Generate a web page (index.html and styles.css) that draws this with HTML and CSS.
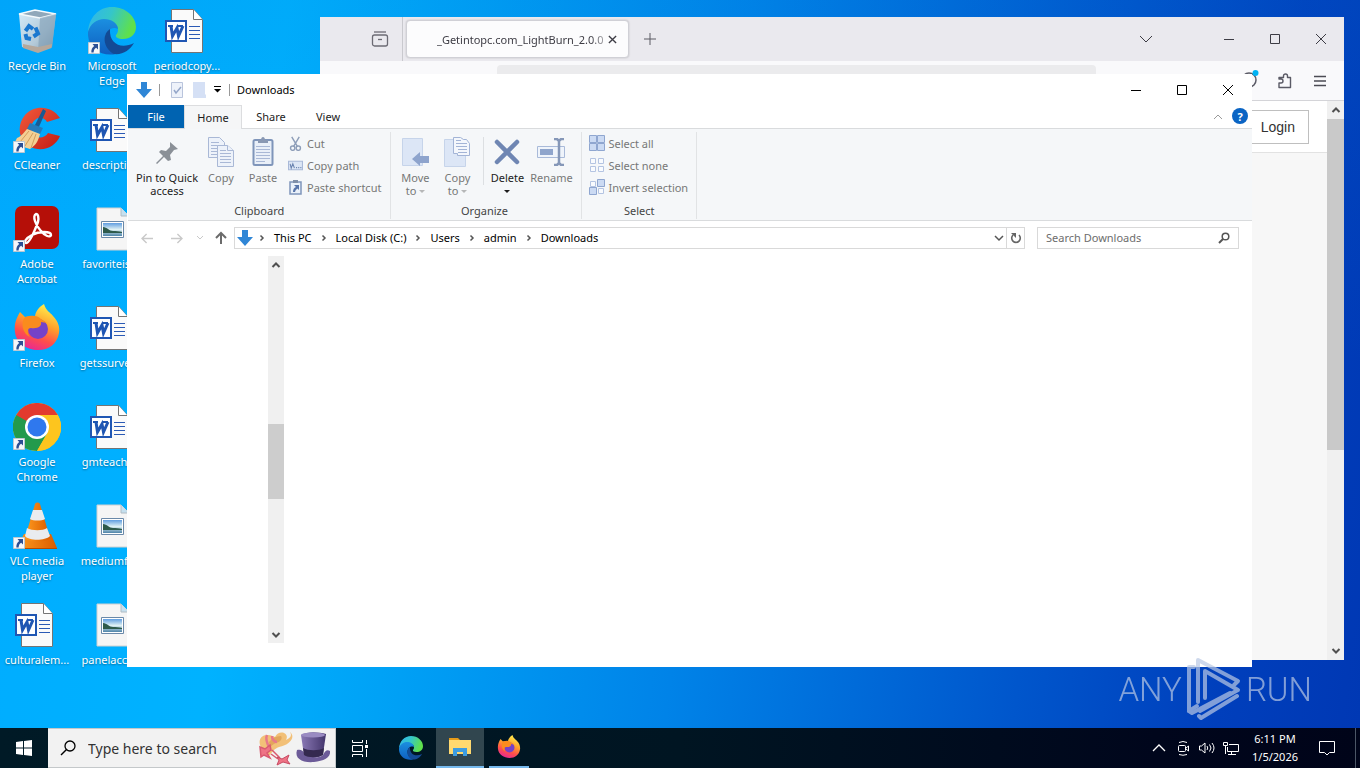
FILE: index.html
```html
<!DOCTYPE html>
<html lang="en">
<head>
<meta charset="utf-8">
<title>Desktop</title>
<link rel="stylesheet" href="styles.css">
</head>
<body>
<svg class="defs" width="0" height="0" aria-hidden="true">
  <defs>
    <linearGradient id="edge-a" x1="0" y1="0" x2="1" y2=".3"><stop offset="0" stop-color="#2fb4f0"/><stop offset=".5" stop-color="#35c6c9"/><stop offset="1" stop-color="#5fe04c"/></linearGradient>
    <linearGradient id="edge-b" x1="0" y1="0" x2="0" y2="1"><stop offset="0" stop-color="#1b8fe0"/><stop offset="1" stop-color="#0f5fc0"/></linearGradient>
    <linearGradient id="fx-a" x1=".7" y1="0" x2=".3" y2="1"><stop offset="0" stop-color="#fff14f"/><stop offset=".4" stop-color="#ffa12b"/><stop offset=".7" stop-color="#ff4f4a"/><stop offset="1" stop-color="#e6259a"/></linearGradient>
    <linearGradient id="bin-a" x1="0" y1="0" x2="1" y2="1"><stop offset="0" stop-color="#e8f2fa"/><stop offset=".6" stop-color="#c3cdd6"/><stop offset="1" stop-color="#8e9aa6"/></linearGradient>
    <linearGradient id="cc-a" x1="0" y1="0" x2="1" y2="1"><stop offset="0" stop-color="#f25a3c"/><stop offset="1" stop-color="#c21c14"/></linearGradient>
    <linearGradient id="vlc-a" x1="0" y1="0" x2="1" y2="0"><stop offset="0" stop-color="#ff9a1f"/><stop offset="1" stop-color="#d95c00"/></linearGradient>
    <linearGradient id="pic-a" x1="0" y1="0" x2="0" y2="1"><stop offset="0" stop-color="#5f9de0"/><stop offset=".5" stop-color="#dff1f4"/><stop offset="1" stop-color="#4d83a8"/></linearGradient>
    <linearGradient id="hat-a" x1="0" y1="0" x2="1" y2="0"><stop offset="0" stop-color="#8a79b5"/><stop offset="1" stop-color="#43356b"/></linearGradient>

    <symbol id="i-link" viewBox="0 0 12 12"><path fill="#f5f7fa" stroke="#bcc8d2" d="M.5.5h11v11H.5z"/><path fill="#2c4f94" d="M4.500 2H10v5.500L8.200 5.800C6.500 6.800 5.700 8.200 5.600 10.500H3.400C3 7.800 4.200 5.300 6.200 3.900z"/></symbol>
    <symbol id="i-bin" viewBox="0 0 48 48"><path d="M6 7 22 3l21 4-4 33-14 5-16-5z" fill="url(#bin-a)" opacity=".92"/><path d="M6 7 22 3l21 4-16 4z" fill="#90a8ba" stroke="#f4fafd" stroke-width="1.500"/><path d="m27 11-2 34 14-5 4-33z" fill="#7f9db4" opacity=".6"/><path d="M10 37 25 40l14-3-.5 4-13.500 5-15-5z" fill="#b5a89c"/><g fill="none" stroke="#1b78cf" stroke-width="4"><path d="m12.500 24 3.500-5 4 3M22.500 20.500l2.500 6-4.500 3M18 32l-4.500-1-1-4"/></g></symbol>
    <symbol id="i-edge" viewBox="0 0 48 48"><path d="M0 25C1 10 11 0 24 0c14 0 24 10 24 20 0 8-6 12-13 12-5 0-8-2-7-4 1-1 2-3 2-5 0-6-6-9-13-9C9 14 3 18 0 25z" fill="url(#edge-a)"/><path d="M0 25C2 17 9 12 16 12c7 0 14 4 14 10-5-3-13 1-13 10 0 7 5 12 11 15C12 50-1 40 0 25z" fill="url(#edge-b)"/><path d="M22 22c-9 6-6 20 4 25 9 1 16-4 20-11-12 6-25 2-24-14z" fill="#134a95"/></symbol>
    <symbol id="i-word" viewBox="0 0 48 48"><path d="M8.500 2.500h22l9 10v33h-31z" fill="#fafafa" stroke="#747474"/><path d="M30.500 2.500v10h9" fill="#fff" stroke="#747474"/><path stroke="#2b5ab5" d="M26 19.500h11M26 23.500h11M26 27.500h11M26 31.500h11"/><path fill="#fff" stroke="#1f56b3" stroke-width="2" d="M3 14h20v20H3z"/><path d="M5 19h5M14 19h6" stroke="#1f56b3" stroke-width="2"/><path d="m8 19 1.500 10 4.500-8 1.500 8 4.500-10" fill="none" stroke="#1f56b3" stroke-width="3"/></symbol>
    <symbol id="i-image" viewBox="0 0 48 48"><path d="M9 3h24l8 8v34H9z" fill="#f5f5f5" stroke="#d0d0d0"/><path d="M33 3v8h8" fill="#c5e0ef" stroke="#b0bcc4"/><path d="M13.500 16.500h22v16h-22z" fill="#fff" stroke="#6a89a9"/><path fill="url(#pic-a)" d="M15 18h19v13H15z"/><path fill="#2e5a4b" d="M15 22c4 0 6 4 10 4 3 0 6 0 9 1v1H15z"/></symbol>
    <symbol id="i-cc" viewBox="0 0 48 48"><path d="M47 12C39 0 22-2 12 9 3 20 6 34 16 40c12 7 26 2 31-10l-12-3c-3 5-10 6-14 2-4-5-3-12 1-15 4-4 10-2 12 2z" fill="url(#cc-a)"/><path d="m30 3 3 2-8 18-4-2z" fill="#195a93"/><path d="m17 17 13 5-3 6-13-5z" fill="#247cbc"/><path d="m14 23 13 5c-2 7-3 10-10 15L1 38l3-6c5-2 7-6 10-9z" fill="#f4cf94"/><path d="m16 25-9 11m13-9-8 13m11-12-5 14" stroke="#d39d5b"/></symbol>
    <symbol id="i-acro" viewBox="0 0 48 48"><rect x="2" y="1" width="44" height="43" rx="7" fill="#b50f08"/><path d="M23 9c-4 2 0 12 5 17 4 5 9 7 10 4 0-4-12-4-19 0-6 3-9 8-6 8 4 0 9-13 12-21 1-5 0-8-2-8z" fill="none" stroke="#fff" stroke-width="2.400"/></symbol>
    <symbol id="i-fx" viewBox="0 0 48 48"><path d="M2 28C1 20 3 15 7 8l5 5c5-1 8-1 10 0 0-5 4-10 9-13 2 7 6 8 9 12 5 5 7 11 6 17-2 11-10 17-21 17S3 39 2 28z" fill="url(#fx-a)"/><circle cx="25" cy="25" r="10" fill="#7542c8"/><path d="M12 13c7-2 12-2 16 2l6 4-6-1c1 4-3 7-10 6-4 0-4 5-1 9-7-3-10-14-5-20z" fill="#fa8c1d"/></symbol>
    <symbol id="i-chrome" viewBox="0 0 48 48"><circle cx="24" cy="24" r="24" fill="#ffc91f"/><path d="M24 24 13.600 30 3.200 12a24 24 0 0 1 41.600 0z" fill="#e23a2e"/><path d="M3.200 12a24 24 0 0 0 20.800 36l10.400-18z" fill="#239a4c"/><path d="M24 12h20.800A24 24 0 0 1 24 48l10.400-18z" fill="#fdc51e"/><circle cx="24" cy="24" r="12" fill="#fff"/><circle cx="24" cy="24" r="9.500" fill="#2f78ee"/></symbol>
    <symbol id="i-vlc" viewBox="0 0 48 48"><path d="m11 32h27l6 14H4z" fill="url(#vlc-a)"/><path d="M4 46h40v1H4z" fill="#b84a00"/><path d="M22 2c1-2 4-2 5 0l10 34c-4 5-21 5-25 0z" fill="url(#vlc-a)"/><path d="m20 8 9 0 3 9c-3 2-12 2-15 0z" fill="#e9ecef"/><path d="m14 26c5 3 16 3 20 0l3 8c-5 5-21 5-25 0z" fill="#e9ecef"/></symbol>
    <symbol id="i-down" viewBox="0 0 16 16"><path d="M5 0h6v7h5l-8 9-8-9h5z" fill="#2f86d6"/></symbol>
    <symbol id="i-pin" viewBox="0 0 24 24"><path d="m15 1 8 7-4 1-4 5 1 5-3 1-4-4-7 7-1-1 7-7-4-4 2-2 5 1 4-4z" fill="#8a9097"/></symbol>
    <symbol id="i-copy" viewBox="0 0 26 30"><g fill="#edf2fa" stroke="#a9b8d6"><path d="M.5.500h11l5 5v15H.5z"/><path d="M3 5.500h8M3 8.500h10M3 11.500h10M3 14.500h10M3 17.500h10"/><path d="M9.500 8.500h10l6 5v16h-16z"/><path d="M19.500 8.500v5h6M12 13.500h6M12 16.500h11M12 19.500h11M12 22.500h11M12 25.500h11"/></g></symbol>
    <symbol id="i-paste" viewBox="0 0 22 30"><rect x="1.500" y="3" width="19" height="25" rx="1.500" fill="#e9eff8" stroke="#7f95ba" stroke-width="2"/><path fill="#8998b3" d="M6 6V3h3c0-4 4-4 4 0h3v3z"/><path stroke="#a9b8d6" d="M4 9.500h14M4 12.500h14M4 15.500h14M4 18.500h14M4 21.500h14M4 24.500h9"/></symbol>
    <symbol id="i-cut" viewBox="0 0 14 16"><g fill="none" stroke="#8d9db8" stroke-width="1.500"><path d="m3 1 6 10M11 1 5 11"/><circle cx="4" cy="13" r="2.300"/><circle cx="10" cy="13" r="2.300"/></g></symbol>
    <symbol id="i-path" viewBox="0 0 14 9"><path fill="#dce6f5" stroke="#a9b9d8" d="M.5.500h13v8H.5z"/><path fill="none" stroke="#6b84b0" d="m2 3 1 4 1.500-4L6 7M7.500 6.500h1M9.500 6.500h1M11.500 6.500h1"/></symbol>
    <symbol id="i-short" viewBox="0 0 13 15"><path d="M1 2h11v12H1z" fill="#eaf1fa" stroke="#7f95ba" stroke-width="1.500"/><path fill="#7f8fa8" d="M4 0h5v3H4z"/><path fill="#5875aa" d="M5 5h5v5L8.500 8.500Q6 10 6 12H4q0-4 3-5z"/></symbol>
    <symbol id="i-move" viewBox="0 0 28 30"><path fill="#dce6f6" stroke="#c6d4ea" d="M1.500 1.500h20v27h-20z"/><path fill="#8ea4cd" d="m11 22 8-7v4h9v7h-9v3z"/></symbol>
    <symbol id="i-copyto" viewBox="0 0 28 30"><path fill="#dce6f6" stroke="#c6d4ea" d="M1.500 2.500h21v27h-21z"/><path fill="#f4f7fc" stroke="#a3b4d6" d="M10.500.500h7l3 2h3l3 4v12h-12v-2h-4z"/><path stroke="#a3b4d6" d="M13 3.500h5M13 6.500h11M13 9.500h11M15 12.500h9M15 15.500h9"/></symbol>
    <symbol id="i-delete" viewBox="0 0 26 26"><path d="m3 3 20 20M23 3 3 23" stroke="#6f86b3" stroke-width="4.500" stroke-linecap="round"/></symbol>
    <symbol id="i-rename" viewBox="0 0 28 28"><path fill="#eff4fb" stroke="#a9bad9" d="M.5 8.500h27v11H.5z"/><path fill="#8fa5cc" d="M3 11h13v6H3z"/><path fill="none" stroke="#8597b8" stroke-width="2.500" d="M17 1h3l2 2 2-2h3M22 2v24M17 27h3l2-2 2 2h3"/></symbol>
    <symbol id="i-all" viewBox="0 0 16 16"><g fill="#cbdaf3" stroke="#8fa6d0"><path d="M.5.500h7v7h-7zM8.500.500h7v7h-7zM.5 8.500h7v7h-7zM8.500 8.500h7v7h-7z"/></g></symbol>
    <symbol id="i-none" viewBox="0 0 16 16"><g fill="#f9fbfe" stroke="#b4c4e2"><path d="M1.500 1.500h5v5h-5zM9.500 1.500h5v5h-5zM1.500 9.500h5v5h-5zM9.500 9.500h5v5h-5z"/></g></symbol>
    <symbol id="i-invert" viewBox="0 0 16 16"><path fill="#f9fbfe" stroke="#b4c4e2" d="M1.500 2.500h5v5h-5zM9.500 9.500h5v5h-5z"/><path fill="#cbdaf3" stroke="#8fa6d0" d="M8.500.500h7v7h-7zM.5 8.500h7v7h-7z"/></symbol>
    <symbol id="i-min" viewBox="0 0 12 12"><path d="M1 6.500h10" stroke="currentColor"/></symbol>
    <symbol id="i-max" viewBox="0 0 12 12"><path d="M1.500 1.500h9v9h-9z" fill="none" stroke="currentColor"/></symbol>
    <symbol id="i-x" viewBox="0 0 12 12"><path d="m1 1 10 10M11 1 1 11" stroke="currentColor" fill="none"/></symbol>
    <symbol id="i-chev" viewBox="0 0 12 12"><path d="m0 3 6 6 6-6" stroke="currentColor" fill="none"/></symbol>
    <symbol id="i-up" viewBox="0 0 12 12"><path d="m2.500 8 3.500-3.500L9.500 8" stroke="currentColor" stroke-width="2" fill="none"/></symbol>
    <symbol id="i-dn" viewBox="0 0 12 12"><path d="m2.500 4 3.500 3.500L9.500 4" stroke="currentColor" stroke-width="2" fill="none"/></symbol>
    <symbol id="i-right" viewBox="0 0 8 8"><path d="m2.500 1.500 2.500 2.500-2.500 2.500" stroke="currentColor" stroke-width="1.500" fill="none"/></symbol>
    <symbol id="i-arrow" viewBox="0 0 14 12"><path d="M1 6h12M6 1 1 6l5 5" stroke="currentColor" stroke-width="1.500" fill="none"/></symbol>
    <symbol id="i-lens" viewBox="0 0 16 16"><circle cx="10" cy="6" r="5" fill="none" stroke="currentColor" stroke-width="1.300"/><path d="M6.500 9.500 1 15" stroke="currentColor" stroke-width="1.500"/></symbol>
    <symbol id="i-find" viewBox="0 0 12 12"><circle cx="7.500" cy="4.500" r="3.300" fill="none" stroke="currentColor" stroke-width="1.500"/><path d="M5 7 1 11" stroke="currentColor" stroke-width="2"/></symbol>
  </defs>
</svg>

<main class="desktop">
  <ul class="shortcuts">
    <li><a href="#bin"><svg class="big"><use href="#i-bin"/></svg><span>Recycle Bin</span></a></li>
    <li><a href="#ccleaner"><svg class="big"><use href="#i-cc"/></svg><svg class="link"><use href="#i-link"/></svg><span>CCleaner</span></a></li>
    <li><a href="#acrobat"><svg class="big"><use href="#i-acro"/></svg><svg class="link"><use href="#i-link"/></svg><span>Adobe Acrobat</span></a></li>
    <li><a href="#firefox"><svg class="big"><use href="#i-fx"/></svg><svg class="link"><use href="#i-link"/></svg><span>Firefox</span></a></li>
    <li><a href="#chrome"><svg class="big"><use href="#i-chrome"/></svg><svg class="link"><use href="#i-link"/></svg><span>Google Chrome</span></a></li>
    <li><a href="#vlc"><svg class="big"><use href="#i-vlc"/></svg><svg class="link"><use href="#i-link"/></svg><span>VLC media player</span></a></li>
    <li><a href="#cultural"><svg class="big"><use href="#i-word"/></svg><span>culturalem...</span></a></li>
    <li><a href="#edge"><svg class="big"><use href="#i-edge"/></svg><svg class="link"><use href="#i-link"/></svg><span>Microsoft Edge</span></a></li>
    <li><a href="#desc"><svg class="big"><use href="#i-word"/></svg><span>descriptio...</span></a></li>
    <li><a href="#fav"><svg class="big"><use href="#i-image"/></svg><span>favoriteisl...</span></a></li>
    <li><a href="#gets"><svg class="big"><use href="#i-word"/></svg><span>getssurvey...</span></a></li>
    <li><a href="#gm"><svg class="big"><use href="#i-word"/></svg><span>gmteache...</span></a></li>
    <li><a href="#medium"><svg class="big"><use href="#i-image"/></svg><span>mediumfo...</span></a></li>
    <li><a href="#panel"><svg class="big"><use href="#i-image"/></svg><span>panelacco...</span></a></li>
    <li><a href="#period"><svg class="big"><use href="#i-word"/></svg><span>periodcopy...</span></a></li>
  </ul>

  <section class="browser" aria-label="Browser">
    <header class="b-tabs">
      <button class="b-view" aria-label="Firefox View"><svg viewBox="0 0 18 18"><g fill="none" stroke="#6c6b74" stroke-width="1.300"><path d="M3 2h12"/><rect x="1.500" y="5" width="15" height="11" rx="2"/><path d="M7 9.500h4"/></g></svg></button>
      <div class="b-tab"><span class="b-title">_Getintopc.com_LightBurn_2.0.0</span><button class="b-close" aria-label="Close tab"><svg viewBox="0 0 10 10"><path d="m1 1 8 8M9 1 1 9" stroke="#3e3d45" stroke-width="1.500"/></svg></button></div>
      <button class="b-new" aria-label="New tab"><svg viewBox="0 0 12 12"><path d="M6 0v12M0 6h12" stroke="#5b5a62"/></svg></button>
      <span class="grow"></span>
      <button class="b-list" aria-label="List all tabs"><svg class="s12"><use href="#i-chev"/></svg></button>
      <button class="win-btn" aria-label="Minimize"><svg class="s12"><use href="#i-min"/></svg></button>
      <button class="win-btn" aria-label="Maximize"><svg class="s12"><use href="#i-max"/></svg></button>
      <button class="win-btn" aria-label="Close"><svg class="s12"><use href="#i-x"/></svg></button>
    </header>
    <div class="b-bar">
      <div class="b-url"></div>
      <button class="b-acc" aria-label="Account"><svg viewBox="0 0 18 18"><circle cx="8" cy="10" r="7" fill="none" stroke="#5b5b66" stroke-width="1.500"/><circle cx="14.500" cy="3" r="3" fill="#00b3f4"/></svg></button>
      <button class="b-ext" aria-label="Extensions"><svg viewBox="0 0 16 16"><path d="M2 14.500V10h2a2 2 0 0 0 0-4H2V4.500h4.500V3a2 2 0 0 1 4 0v1.500h3v10z" fill="none" stroke="#5b5b66" stroke-width="1.400" stroke-linejoin="round"/></svg></button>
      <button class="b-menu" aria-label="Menu"><svg viewBox="0 0 12 12"><path d="M0 1.500h12M0 6h12M0 10.500h12" stroke="#4b4b54" stroke-width="1.300"/></svg></button>
    </div>
    <div class="b-page">
      <div class="b-doc"><div class="b-head"><a class="login" href="#login">Login</a></div></div>
      <div class="sbar b-scroll"><svg class="s12"><use href="#i-up"/></svg><i class="b-thumb"></i><span class="grow"></span><svg class="s12"><use href="#i-dn"/></svg></div>
    </div>
  </section>

  <section class="explorer" aria-label="Downloads">
    <header class="e-title">
      <svg class="s16"><use href="#i-down"/></svg><i class="rule"></i>
      <svg class="q1" viewBox="0 0 12 16"><path d="M.5.500h11v15H.5z" fill="#eef2fa" stroke="#b9c4dc"/><path d="m3 8 2 3 5-6" fill="none" stroke="#94a6c9" stroke-width="1.500"/></svg>
      <svg class="q2" viewBox="0 0 13 16"><path d="M0 0h12v12l1 1v3H0z" fill="#d5e0f5"/></svg>
      <svg class="q3" viewBox="0 0 7 7"><path d="M0 .500h7" stroke="#000"/><path d="M0 3h7L3.500 6.500z"/></svg><i class="rule"></i>
      <h1>Downloads</h1><span class="grow"></span>
      <button class="win-btn" aria-label="Minimize"><svg class="s12"><use href="#i-min"/></svg></button>
      <button class="win-btn" aria-label="Maximize"><svg class="s12"><use href="#i-max"/></svg></button>
      <button class="win-btn" aria-label="Close"><svg class="s12"><use href="#i-x"/></svg></button>
    </header>
    <nav class="e-tabs">
      <button class="file">File</button><button class="on">Home</button><button>Share</button><button>View</button>
      <span class="grow"></span>
      <button class="fold" aria-label="Collapse ribbon"><svg viewBox="0 0 10 10"><path d="m1 7 4-4 4 4" fill="none" stroke="#9a9a9a"/></svg></button>
      <button class="help" aria-label="Help">?</button>
    </nav>
    <div class="ribbon">
      <div class="group">
        <div class="tools">
          <button class="tool pin"><svg class="i-24"><use href="#i-pin"/></svg><span>Pin to Quick access</span></button>
          <button class="tool off"><svg class="i-30"><use href="#i-copy"/></svg><span>Copy</span></button>
          <button class="tool off"><svg class="i-30"><use href="#i-paste"/></svg><span>Paste</span></button>
          <div class="minis clip">
            <button><svg><use href="#i-cut"/></svg>Cut</button>
            <button><svg><use href="#i-path"/></svg>Copy path</button>
            <button><svg><use href="#i-short"/></svg>Paste shortcut</button>
          </div>
        </div>
        <h2>Clipboard</h2>
      </div>
      <div class="group organize">
        <div class="tools">
          <button class="tool off"><svg class="i-30"><use href="#i-move"/></svg><span>Move<br>to <i class="tri"></i></span></button>
          <button class="tool off"><svg class="i-30"><use href="#i-copyto"/></svg><span>Copy<br>to <i class="tri"></i></span></button>
          <i class="sep"></i>
          <button class="tool"><svg class="i-26"><use href="#i-delete"/></svg><span>Delete<br><i class="tri"></i></span></button>
          <button class="tool off wide"><svg class="i-28"><use href="#i-rename"/></svg><span>Rename</span></button>
        </div>
        <h2>Organize</h2>
      </div>
      <div class="group">
        <div class="tools">
          <div class="minis sel">
            <button><svg><use href="#i-all"/></svg>Select all</button>
            <button><svg><use href="#i-none"/></svg>Select none</button>
            <button><svg><use href="#i-invert"/></svg>Invert selection</button>
          </div>
        </div>
        <h2>Select</h2>
      </div>
    </div>
    <div class="address">
      <button class="nav dim" aria-label="Back"><svg><use href="#i-arrow"/></svg></button>
      <button class="nav dim fwd" aria-label="Forward"><svg><use href="#i-arrow"/></svg></button>
      <button class="recent dim" aria-label="Recent locations"><svg viewBox="0 0 8 8"><path d="m1 2 3 3 3-3" fill="none" stroke="currentColor"/></svg></button>
      <button class="upward" aria-label="Up"><svg viewBox="0 0 14 14"><path d="M7 13V2M2 7l5-5 5 5" fill="none" stroke="#6b6b6b" stroke-width="2"/></svg></button>
      <div class="crumbs">
        <svg class="s16"><use href="#i-down"/></svg>
        <svg class="c"><use href="#i-right"/></svg><a href="#pc">This PC</a>
        <svg class="c"><use href="#i-right"/></svg><a href="#c">Local Disk (C:)</a>
        <svg class="c"><use href="#i-right"/></svg><a href="#users">Users</a>
        <svg class="c"><use href="#i-right"/></svg><a href="#admin">admin</a>
        <svg class="c"><use href="#i-right"/></svg><a href="#dl">Downloads</a>
        <span class="grow"></span>
        <button class="drop" aria-label="Previous locations"><svg viewBox="0 0 10 10"><path d="m1 3 4 4 4-4" fill="none" stroke="#555" stroke-width="1.500"/></svg></button>
        <button class="reload" aria-label="Refresh"><svg viewBox="0 0 12 12"><path d="M9 3a4.300 4.300 0 1 1-6 0" fill="none" stroke="#666" stroke-width="1.600"/><path d="M1 1h5v5z" fill="#666"/></svg></button>
      </div>
      <label class="find"><input type="text" placeholder="Search Downloads" aria-label="Search Downloads"><svg><use href="#i-find"/></svg></label>
    </div>
    <div class="e-body">
      <div class="sbar e-scroll"><svg class="s12"><use href="#i-up"/></svg><span class="f1"></span><i class="e-thumb"></i><span class="f2"></span><svg class="s12"><use href="#i-dn"/></svg></div>
    </div>
  </section>

  <div class="mark">
    <span>ANY</span>
    <svg viewBox="0 0 56 66"><g fill="none" stroke-width="4" stroke-linejoin="round" stroke-linecap="round"><path d="M8 11H3v44l8-5"/><path d="M12 46V4l40 21-4 4M19 42V15l33 19-38 21"/><path d="m3 55 3 2 38-20M13 60l2 2 36-22"/></g></svg>
    <span>RUN</span>
  </div>
</main>

<footer class="taskbar">
  <button class="cell" aria-label="Start"><svg class="s16" viewBox="0 0 16 16"><path fill="#fff" d="M0 2l7-1v6.500H0zM8 1l8-1v7.500H8zM0 8.500h7V15l-7-1zM8 8.500h8V16l-8-1z"/></svg></button>
  <label class="search"><svg class="lens"><use href="#i-lens"/></svg><input type="text" placeholder="Type here to search" aria-label="Type here to search">
    <svg class="hats" viewBox="0 0 72 36"><path d="M2 17C-2 10 3 4 9 5c3 0 5 1 7 2C20-1 31 3 27 10c5-2 6-5 4-8 6 5 0 13-11 15-5 2-7 5-9 8C6 26 3 22 2 17z" fill="#f2c078"/><path d="M10 12c3-4 7-6 12-6 2 3-1 6-5 7-3 1-5 3-6 5z" fill="#e2a65c"/><path d="M8 5c-2 4 0 8 2 12M13 6c0 3 2 6 5 6" fill="none" stroke="#e8798a" stroke-width="2.500"/><path d="m1 17 5 2 5-4 1 5-4 3 3 5-6-3-3 2zM13 20l8 8M12 24l7 5" fill="#ee7385" stroke="#d9596f" stroke-width="1.500"/><path d="m18 27 5 2 7-4-2 5 3 4-7-2-6 3 2-5z" fill="#ee7385" stroke="#c74a62"/><path d="M42 5c6-4 18-3 25-1l-3 20c-4 5-16 5-19 1z" fill="url(#hat-a)"/><ellipse cx="54" cy="5" rx="12" ry="2.500" fill="#9a8bc2"/><path d="M38 20c-3 9 6 13 17 12 9-1 17-4 16-11-3-2-5 0-7 4-5 4-16 3-18-1-2-4-5-5-8-4z" fill="#6c5b98"/><path d="m44 18 1 7c4 3 14 3 19 0l1-7c-5 3-16 3-21 0z" fill="#34294f"/></svg></label>
  <button class="cell" aria-label="Task view"><svg class="s18" viewBox="0 0 18 18"><g fill="none" stroke="#fff"><path d="M1.500 1v2.500h10V1M1.500 6.500h10v6h-10zM1.500 18v-2.500h10V18M15.500 1v4M15.500 10v8"/></g><path fill="#fff" d="M14 6h3v3h-3z"/></svg></button>
  <button class="cell gapped" aria-label="Edge"><svg class="s24"><use href="#i-edge"/></svg></button>
  <button class="cell active" aria-label="File Explorer"><svg class="s24" viewBox="0 0 24 24"><path d="M1 3h9l2 2h10v6H1z" fill="#e59b19"/><path d="M1 5h22v14H1z" fill="#ffd970"/><path d="M5 13h14v8h-4v-4H9v4H5z" fill="#3d9ce0"/></svg></button>
  <button class="cell running" aria-label="Firefox"><svg class="s24"><use href="#i-fx"/></svg></button>
  <span class="grow"></span>
  <button class="tray" aria-label="Show hidden icons"><svg viewBox="0 0 16 16"><path d="m2 11 6-6 6 6" fill="none" stroke="#fff" stroke-width="1.300"/></svg></button>
  <button class="tray" aria-label="Meet now"><svg viewBox="0 0 16 16"><g fill="none" stroke="#fff"><rect x="3.500" y="5.500" width="7" height="6" rx="1"/><path d="m11 8 2.500-2v5L11 9M4 2.500q4-2 8 0M4 14.500q4 1.500 8 0"/></g></svg></button>
  <button class="tray" aria-label="Volume"><svg viewBox="0 0 16 16"><g fill="none" stroke="#fff"><path d="M.5 6v4h2l3.500 3V3L2.500 6zM8 6q1.500 2 0 4M10.500 4.500q3 3.500 0 7M13 3q4 5 0 10"/></g></svg></button>
  <button class="tray" aria-label="Network"><svg viewBox="0 0 16 16"><g fill="none" stroke="#fff"><path d="M6 4.500h9.500v7H4.500V7M8.500 11.500v3M5 14.500h8M.5 2.500h4v3h-4zM2.500 6v8"/></g></svg></button>
  <time class="clock">6:11 PM<br>1/5/2026</time>
  <button class="note" aria-label="Notifications"><svg viewBox="0 0 18 18"><path d="M1.500 2.500h15v11h-5L9 16l-2.500-2.500h-5z" fill="none" stroke="#fff"/></svg></button>
  <i class="peek"></i>
</footer>
</body>
</html>
```

FILE: styles.css
```css
* { box-sizing: border-box; }
body {
  margin: 0;
  height: 100vh;
  overflow: hidden;
  display: flex;
  flex-direction: column;
  font-family: "Noto Sans", "Open Sans", sans-serif;
  font-size: 11px;
  color: #1a1a1a;
}
button, input { font: inherit; color: inherit; border: 0; padding: 0; margin: 0; background: none; }
button { display: flex; align-items: center; justify-content: center; }
a { color: inherit; text-decoration: none; }
svg { display: block; flex: none; }
h1, h2 { margin: 0; font-size: 11px; font-weight: 400; }
.defs { position: absolute; }
.grow { flex: 1; }
.s12 { width: 12px; height: 12px; }
.s16 { width: 16px; height: 16px; }
.s18 { width: 18px; height: 18px; }
.s24 { width: 24px; height: 24px; }

.desktop {
  position: relative;
  flex: 1;
  background:
    linear-gradient(180deg, #0078d822, #0078d800 50%),
    linear-gradient(97deg, #00acff 0%, #00b2ff 20%, #00a2f6 32%, #0083e8 52%, #0056cc 76%, #003fbc 90%, #0038b4 100%);
}
.shortcuts {
  margin: 0;
  padding: 0;
  list-style: none;
  display: grid;
  grid-template-rows: repeat(7, 99px);
  grid-auto-columns: 75px;
  grid-auto-flow: column;
}
.shortcuts a { position: relative; display: flex; flex-direction: column; align-items: center; padding: 7px 4px 0 3px; color: #fff; }
.shortcuts span { margin-top: 3px; line-height: 15px; text-align: center; text-shadow: 0 1px 2px #0006; }
.big { width: 48px; height: 48px; }
.link { position: absolute; left: 13px; top: 42px; width: 12px; height: 12px; }

.browser {
  position: absolute;
  left: 320px; right: 16px; top: 17px; bottom: 68px;
  display: flex;
  flex-direction: column;
  background: #f7f7f8;
}
.b-tabs { display: flex; align-items: center; height: 44px; background: #eae9ee; color: #3d3c44; }
.b-view { width: 83px; height: 44px; padding-left: 38px; border-right: 1px solid #c9c9ce; }
.b-view svg { width: 18px; height: 18px; }
.b-tab { display: flex; align-items: center; width: 223px; height: 38px; margin-left: 3px; padding: 0 11px 0 30px; background: #fcfcfd; border: 1px solid #d0d0d6; border-radius: 4px; box-shadow: 0 0 2px #0003; }
.b-title { flex: 1; white-space: nowrap; mask-image: linear-gradient(90deg, #000 90%, #0004 100%); }
.b-close svg { width: 9px; height: 9px; }
.b-new { width: 42px; }
.b-new svg { width: 12px; height: 12px; }
.b-list { width: 46px; margin-right: 37px; }
.win-btn { width: 46px; height: 30px; }
.b-bar { display: flex; align-items: flex-start; height: 40px; padding: 4px 15px 0 177px; background: #f9f9fb; border-bottom: 1px solid #d4d4d8; }
.b-url { flex: 1; height: 32px; background: #ebebed; border-radius: 4px; margin-right: 145px; }
.b-ext svg { width: 16px; height: 16px; }
.b-acc { width: 18px; height: 28px; }
.b-acc svg { width: 18px; height: 18px; }
.b-ext { width: 52px; height: 32px; }
.b-menu { width: 18px; height: 32px; }
.b-menu svg { width: 12px; height: 12px; }
.b-page { flex: 1; display: flex; }
.b-doc { flex: 1; background: #f7f7f7; }
.b-head { height: 52px; display: flex; justify-content: flex-end; align-items: center; padding-right: 18px; background: #fff; border-bottom: 1px solid #e2e2e2; }
.login { padding: 0 13px 0 24px; border: 1px solid #bfbfbf; font: 14px/32px "Liberation Sans", sans-serif; color: #333; }

.sbar { display: flex; flex-direction: column; align-items: center; background: #f0f0f0; color: #505050; }
.b-scroll { width: 17px; padding: 3px 0; }
.b-thumb { width: 17px; flex: 0 1 331px; margin-top: 3px; background: #c9c9c9; }

.explorer {
  position: absolute;
  left: 127px; right: 108px; top: 74px; bottom: 61px;
  display: flex;
  flex-direction: column;
  padding-left: 1px;
  background: #fff;
  color: #1c1c1c;
}
.e-title { display: flex; align-items: center; height: 31px; padding: 0 1px 0 8px; color: #000; }
.rule { width: 1px; height: 12px; margin: 0 7px; background: #999; }
.q1 { width: 12px; height: 16px; margin: 0 10px 0 4px; }
.q2 { width: 13px; height: 16px; margin-right: 8px; }
.q3 { width: 7px; height: 7px; margin-right: 1px; }
.e-tabs { display: flex; align-items: flex-end; height: 24px; border-bottom: 1px solid #d9dbdd; }
.e-tabs button { width: 56px; height: 23px; }
.e-tabs .file { background: #0063b1; color: #fff; }
.e-tabs .on { width: 58px; height: 24px; margin-bottom: -1px; background: #f5f6f7; border: 1px solid #dcdddf; border-bottom: 0; }
.e-tabs .on + button { width: 58px; }
.e-tabs .fold { width: 20px; }
.fold svg { width: 10px; height: 10px; }
.e-tabs .help { width: 16px; height: 16px; margin: 0 4px 4px 4px; border-radius: 50%; background: #0a64c4; color: #fff; font-weight: 700; }
.ribbon { display: flex; height: 92px; background: #f5f7f9; border-bottom: 1px solid #d9dbdd; }
.group { display: flex; flex-direction: column; margin: 3px 0 1px; border-right: 1px solid #e1e3e5; }
.group h2 { line-height: 16px; text-align: center; color: #444; }
.organize { padding-right: 4px; }
.tools { flex: 1; display: flex; padding: 0 3px; }
.tool { flex-direction: column; justify-content: flex-start; width: 42px; line-height: 13px; padding-top: 5px; }
.tool svg { height: 30px; width: 28px; }
.tool .i-24 { width: 24px; height: 24px; margin: 4px 0 2px; }
.tool .i-26 { width: 26px; height: 26px; margin: 2px 0; }
.tool .i-28 { height: 28px; margin: 1px 0; }
.tool span { margin-top: 4px; }
.pin { width: 66px; margin-left: 3px; }
.tool.wide { width: 46px; }
.off, .minis { color: #777; }
.tri { display: inline-block; vertical-align: 2px; border: 3px solid transparent; border-top-color: currentColor; border-bottom: 0; }
.off .tri { opacity: .5; }
.sep { width: 1px; margin: 5px 2px 18px 5px; background: #dcdfe2; }
.minis { display: flex; flex-direction: column; }
.minis button { height: 22px; justify-content: flex-start; gap: 4px; }
.minis svg { width: 15px; height: 15px; }
.clip { padding: 0 6px 0 4px; }
.sel { padding: 0 5px 0 4px; }
.sel svg { width: 16px; height: 16px; }
.sel button { gap: 3px; }
.address { display: flex; align-items: center; height: 34px; padding: 0 13px 0 6px; color: #000; }
.nav { width: 26px; }
.fwd { margin-left: 4px; transform: scaleX(-1); }
.nav svg { width: 13px; height: 11px; }
.dim { color: #c9c9c9; }
.recent { width: 20px; }
.recent svg { width: 8px; height: 8px; }
.upward { width: 22px; margin-right: 2px; }
.upward svg { width: 14px; height: 14px; }
.crumbs { flex: 1; display: flex; align-items: center; height: 22px; margin-right: 12px; padding-left: 2px; border: 1px solid #d9d9d9; }
.crumbs a, .find input { padding-bottom: 2px; }
.c { width: 8px; height: 8px; margin: 0 8px; color: #555; }
.s16 + .c { margin-left: 5px; }
.drop { width: 15px; height: 20px; }
.drop svg { width: 10px; height: 10px; }
.reload { width: 18px; height: 20px; border-left: 1px solid #d9d9d9; }
.reload svg { width: 12px; height: 12px; }
.find { display: flex; align-items: center; width: 202px; height: 22px; padding: 0 8px; border: 1px solid #d9d9d9; color: #555; }
.find input { flex: 1; min-width: 0; outline: 0; }
.find svg { width: 12px; height: 12px; }
input::placeholder { color: inherit; opacity: 1; }
.find input::placeholder { color: #6d6d6d; }
.e-body { flex: 1; display: flex; padding: 1px 0 24px 140px; }
.e-scroll { width: 16px; padding: 3px 0 2px; }
.e-thumb { width: 16px; height: 75px; background: #cdcdcd; }
.f1 { flex: 153; }
.f2 { flex: 130; }

.mark { position: absolute; right: 48px; top: 656px; height: 66px; display: flex; align-items: center; gap: 4px; font: 300 33px Roboto, "Liberation Sans", sans-serif; color: #b9c8e4; opacity: .7; }
.mark svg { width: 56px; height: 66px; stroke: #b9c8e4; }

.taskbar { display: flex; height: 40px; background: linear-gradient(90deg, #001a26, #001522 50%, #00061c 85%, #000419); color: #fff; }
.cell { width: 48px; height: 40px; }
.gapped { margin: 0 1px 0 3px; }
.active { background: #31464f; border-bottom: 2px solid #76b9ed; }
.running { width: 40px; margin-left: 5px; border-bottom: 2px solid #76b9ed; }
.search { display: flex; align-items: center; width: 288px; padding: 0 4px 0 12px; background: #f2f2f2; border: 1px solid #c4c8ca; border-left: 0; color: #000; }
.lens { width: 16px; height: 16px; }
.search input { flex: 1; min-width: 0; margin-left: 12px; font-size: 14px; outline: 0; }
.search input::placeholder { color: #333; }
.hats { width: 72px; height: 36px; }
.tray { width: 24px; height: 40px; }
.tray svg { width: 16px; height: 16px; }
.clock { width: 64px; padding-top: 2px; text-align: center; line-height: 18px; }
.note { width: 40px; height: 40px; }
.note svg { width: 18px; height: 18px; }
.peek { width: 1px; margin: 0 4px 0 8px; background: #4c5666; }
```
